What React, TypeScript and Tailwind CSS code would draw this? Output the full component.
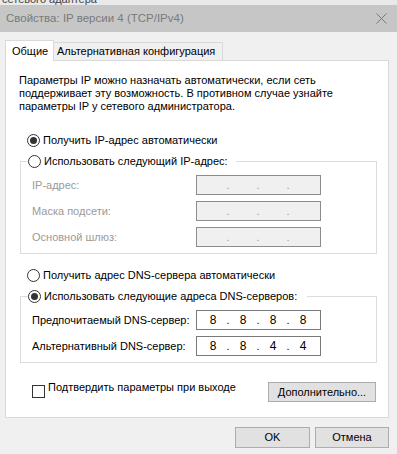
import React from "react";

const FONT = { fontFamily: '"Liberation Sans", Arial, sans-serif' };

function Radio({ checked }: { checked?: boolean }) {
  return (
    <span className="w-[13px] h-[13px] rounded-full border border-[#333] bg-white flex items-center justify-center shrink-0">
      {checked ? <span className="w-[7px] h-[7px] rounded-full bg-[#333]" /> : null}
    </span>
  );
}

function IpBox({ values, disabled }: { values?: string[]; disabled?: boolean }) {
  const v = values ?? ["", "", "", ""];
  return (
    <div
      className={
        "w-[125px] h-[20px] border flex items-center pl-[3px] " +
        (disabled ? "bg-[#f0f0f0] border-[#8c8c8c] text-[#9a9a9a]" : "bg-white border-[#7a7a7a] text-black")
      }
    >
      {v.map((o, i) => (
        <React.Fragment key={i}>
          <span className="w-[26px] text-center leading-[18px] text-[12px]">{o}</span>
          {i < 3 ? <span className="w-[4px] text-center leading-[18px]">.</span> : null}
        </React.Fragment>
      ))}
    </div>
  );
}

function Row({ label, disabled, values }: { label: string; disabled?: boolean; values?: string[] }) {
  return (
    <div className="flex items-center h-[20px]">
      <span className={"w-[175px] pl-[11px] whitespace-nowrap " + (disabled ? "text-[#9a9a9a]" : "text-black")}>{label}</span>
      <IpBox disabled={disabled} values={values} />
    </div>
  );
}

export default function App() {
  return (
    <div className="w-[397px] h-[454px] bg-[#f0f0f0] overflow-hidden text-[11px] leading-[13px] text-black flex flex-col" style={FONT}>
      {/* background window strip */}
      <div className="h-[5px] bg-[#e9e9e9] overflow-hidden shrink-0 relative">
        <span className="absolute left-[2px] -top-[7px] text-[11px] leading-[12px] text-[#444] whitespace-nowrap">сетевого адаптера</span>
      </div>
      {/* title bar */}
      <div className="h-[27px] bg-[#c6c6c6] flex items-center justify-between pl-[6px] pr-[10px] shrink-0">
        <span className="text-[11.5px] text-[#7a7a7a] whitespace-nowrap">Свойства: IP версии 4 (TCP/IPv4)</span>
        <svg width="11" height="11" viewBox="0 0 11 11">
          <path d="M0.5 0.5 L10.5 10.5 M10.5 0.5 L0.5 10.5" stroke="#7a7a7a" strokeWidth="1" />
        </svg>
      </div>
      {/* body */}
      <div className="pl-[5px] pt-[8px] flex flex-col">
        <div className="flex items-end h-[20px]">
          <div className="h-[21px] w-[49px] bg-white border border-b-0 border-[#d9d9d9] pl-[6px] flex items-center relative z-10 -mb-px whitespace-nowrap">
            Общие
          </div>
          <div className="h-[18px] w-[169px] bg-[#f0f0f0] border border-l-0 border-b-0 border-[#d9d9d9] pl-[3px] flex items-center whitespace-nowrap">
            Альтернативная конфигурация
          </div>
        </div>
        <div className="w-[384px] h-[358px] bg-white border border-[#d9d9d9] flex flex-col pl-[13px]">
          <p className="pt-[13px] whitespace-nowrap">
            Параметры IP можно назначать автоматически, если сеть
            <br />
            поддерживает эту возможность. В противном случае узнайте
            <br />
            параметры IP у сетевого администратора.
          </p>
          <div className="mt-[21px] ml-[8px] flex items-center gap-[3px] h-[13px]">
            <Radio checked />
            <span>Получить IP-адрес автоматически</span>
          </div>
          <fieldset className="mt-[8px] ml-[1px] w-[357px] border border-[#dcdcdc] pb-[6px]">
            <legend className="ml-[7px] pr-[8px] flex items-center gap-[3px] h-[13px]">
              <Radio />
              <span>Использовать следующий IP-адрес:</span>
            </legend>
            <div className="mt-[7px] flex flex-col gap-[6px]">
              <Row label="IP-адрес:" disabled />
              <Row label="Маска подсети:" disabled />
              <Row label="Основной шлюз:" disabled />
            </div>
          </fieldset>
          <div className="mt-[15px] ml-[8px] flex items-center gap-[3px] h-[13px]">
            <Radio />
            <span>Получить адрес DNS-сервера автоматически</span>
          </div>
          <fieldset className="mt-[8px] ml-[1px] w-[357px] border border-[#dcdcdc] pb-[6px]">
            <legend className="ml-[7px] pr-[10px] flex items-center gap-[3px] h-[13px]">
              <Radio checked />
              <span>Использовать следующие адреса DNS-серверов:</span>
            </legend>
            <div className="mt-[7px] flex flex-col gap-[6px]">
              <Row label="Предпочитаемый DNS-сервер:" values={["8", "8", "8", "8"]} />
              <Row label="Альтернативный DNS-сервер:" values={["8", "8", "4", "4"]} />
            </div>
          </fieldset>
          <div className="mt-[19px] flex items-start justify-between w-[357px]">
            <div className="flex items-start gap-[3px] ml-[13px] pt-[3px]">
              <span className="w-[13px] h-[13px] border border-[#333] bg-white shrink-0" />
              <span className="-mt-[4px] leading-[13px] whitespace-nowrap">Подтвердить параметры при выходе</span>
            </div>
            <button className="w-[108px] h-[20px] bg-[#e1e1e1] border border-[#adadad] flex items-center justify-center whitespace-nowrap">
              Дополнительно...
            </button>
          </div>
        </div>
        <div className="flex justify-end gap-[5px] pr-[8px] pt-[9px]">
          <button className="w-[75px] h-[21px] bg-[#e1e1e1] border border-[#adadad] flex items-center justify-center">OK</button>
          <button className="w-[74px] h-[21px] bg-[#e1e1e1] border border-[#adadad] flex items-center justify-center">Отмена</button>
        </div>
      </div>
    </div>
  );
}
